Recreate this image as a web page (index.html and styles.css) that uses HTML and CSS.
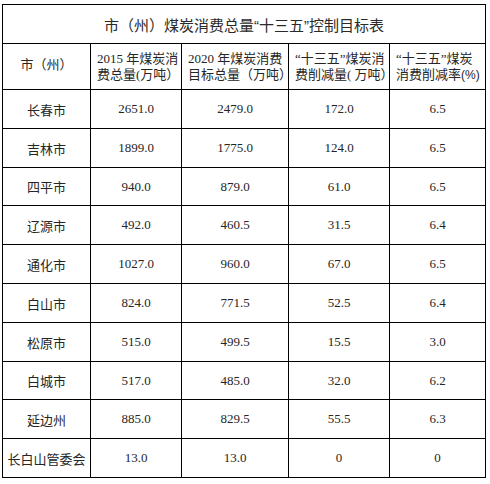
FILE: index.html
```html
<!DOCTYPE html>
<html lang="zh-CN">
<head>
<meta charset="utf-8">
<title>市（州）煤炭消费总量“十三五”控制目标表</title>
<link rel="stylesheet" href="styles.css">
</head>
<body>
<div class="sheet">
  <div class="title">市（州）煤炭消费总量“十三五”控制目标表</div>

  <div class="th center"><span>市（州）</span></div>
  <div class="th"><span>2015 年煤炭消<br>费总量(万吨）</span></div>
  <div class="th"><span>2020 年煤炭消费<br>目标总量（万吨）</span></div>
  <div class="th"><span>“十三五”煤炭消<br>费削减量( 万吨）</span></div>
  <div class="th"><span>“十三五”煤炭<br>消费削减率<span class="sans">(%)</span></span></div>

  <div class="td">长春市</div><div class="td">2651.0</div><div class="td">2479.0</div><div class="td">172.0</div><div class="td">6.5</div>
  <div class="td">吉林市</div><div class="td">1899.0</div><div class="td">1775.0</div><div class="td">124.0</div><div class="td">6.5</div>
  <div class="td">四平市</div><div class="td">940.0</div><div class="td">879.0</div><div class="td">61.0</div><div class="td">6.5</div>
  <div class="td">辽源市</div><div class="td">492.0</div><div class="td">460.5</div><div class="td">31.5</div><div class="td">6.4</div>
  <div class="td">通化市</div><div class="td">1027.0</div><div class="td">960.0</div><div class="td">67.0</div><div class="td">6.5</div>
  <div class="td">白山市</div><div class="td">824.0</div><div class="td">771.5</div><div class="td">52.5</div><div class="td">6.4</div>
  <div class="td">松原市</div><div class="td">515.0</div><div class="td">499.5</div><div class="td">15.5</div><div class="td">3.0</div>
  <div class="td">白城市</div><div class="td">517.0</div><div class="td">485.0</div><div class="td">32.0</div><div class="td">6.2</div>
  <div class="td">延边州</div><div class="td">885.0</div><div class="td">829.5</div><div class="td">55.5</div><div class="td">6.3</div>
  <div class="td">长白山管委会</div><div class="td">13.0</div><div class="td">13.0</div><div class="td">0</div><div class="td">0</div>
</div>
</body>
</html>
```

FILE: styles.css
```css
html, body {
  margin: 0;
  padding: 0;
  background: #fff;
}

.sheet {
  margin: 4px 0 0 2px;
  width: 482px;
  display: grid;
  grid-template-columns: 87px 90px 106px 100px 95px;
  grid-template-rows: 38px 45px 38px 38px 37px 38px 38px 38px 38px 37px 38px 38px;
  gap: 1px;
  padding: 1px;
  background: #000;
  font-family: "Liberation Serif", "Noto Sans CJK SC", serif;
  color: #262626;
}

.sheet > div {
  background: #fff;
}

.title {
  grid-column: 1 / span 5;
  display: flex;
  align-items: center;
  justify-content: center;
  font-family: "Liberation Sans", "Noto Sans CJK SC", sans-serif;
  font-size: 15px;
  color: #2a2a2a;
}

.th {
  display: flex;
  align-items: center;
  padding-left: 6px;
  font-size: 13px;
  line-height: 16px;
  white-space: nowrap;
}

.th.center {
  justify-content: center;
  padding-left: 0;
  padding-bottom: 4px;
}

.sans {
  font-family: "Liberation Sans", sans-serif;
  font-size: 12px;
}

.td {
  display: flex;
  align-items: center;
  justify-content: center;
  font-size: 13px;
}
```
